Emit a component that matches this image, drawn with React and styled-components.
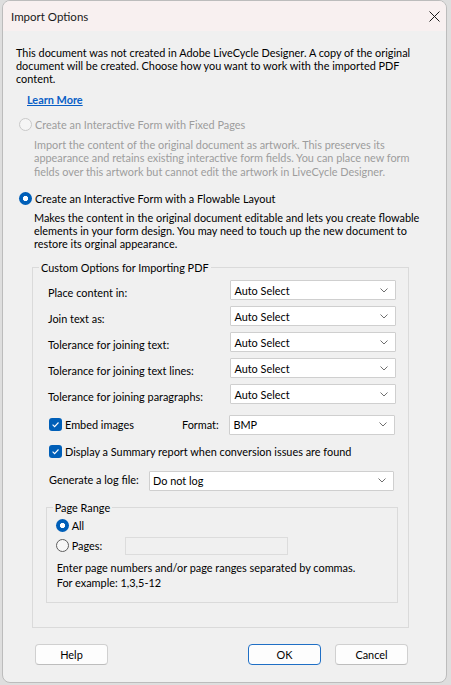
import React from 'react';
import styled, { createGlobalStyle, css } from 'styled-components';

const GlobalStyle = createGlobalStyle`
  html, body {
    margin: 0;
    padding: 0;
    background: #dedede;
  }
  body {
    font-family: Lato, "Liberation Sans", sans-serif;
    font-size: 10.9px;
    color: #000;
  }
`;

const Window = styled.div`
  width: 445px;
  height: 683px;
  margin-left: 2px;
  box-sizing: border-box;
  border: 1px solid #bcbcbc;
  border-radius: 8px;
  overflow: hidden;
  background: #f0f0f0;
  display: flex;
  flex-direction: column;
`;

const TitleBar = styled.div`
  height: 30px;
  flex: none;
  background: #f8f0f0;
  display: flex;
  align-items: center;
  justify-content: space-between;
  padding: 0 6px 0 8px;
`;

const Title = styled.span`
  font-size: 11.5px;
  color: #1a1a1a;
`;

const Content = styled.div`
  display: flex;
  flex-direction: column;
  align-items: flex-start;
`;

const Paragraph = styled.p`
  margin: ${({ $mt }) => $mt}px 0 0 ${({ $ml }) => $ml}px;
  line-height: ${({ $lh }) => $lh || 13}px;
  color: ${({ $disabled }) => ($disabled ? '#9d9d9d' : '#000')};
  white-space: nowrap;
`;

const LearnMore = styled.a`
  margin: 8px 0 0 24px;
  line-height: 13px;
  font-weight: 700;
  color: #0a5fc6;
  text-decoration: underline;
  cursor: pointer;
`;

const RadioRow = styled.label`
  display: flex;
  align-items: center;
  gap: 3px;
  height: ${({ $h }) => $h || 13}px;
  margin: ${({ $mt }) => $mt || 0}px 0 0 ${({ $ml }) => $ml || 0}px;
  color: ${({ $disabled }) => ($disabled ? '#9d9d9d' : '#000')};
  line-height: 13px;
  white-space: nowrap;
`;

const Radio = styled.span`
  width: 13px;
  height: 13px;
  flex: none;
  box-sizing: border-box;
  border-radius: 50%;
  ${({ $checked, $disabled }) =>
    $checked
      ? css`
          background: radial-gradient(circle, #fff 0 2.4px, #005fb8 2.9px);
        `
      : $disabled
      ? css`
          border: 1px solid #c9c9c9;
          background: #f5f5f5;
        `
      : css`
          border: 1px solid #5e5e5e;
          background: #f7f7f7;
        `}
`;

const GroupBox = styled.fieldset`
  margin: ${({ $mt }) => $mt}px 0 0 ${({ $ml }) => $ml}px;
  width: ${({ $w }) => $w}px;
  box-sizing: border-box;
  min-width: 0;
  border: 1px solid #dadada;
  padding: ${({ $pad }) => $pad};
  display: flex;
  flex-direction: column;
`;

// the legend is placed after the fieldset's left padding, so pull it back
const Legend = styled.legend`
  margin-left: ${({ $ml }) => $ml}px;
  padding: 0 2px;
  line-height: 13px;
`;

const OptionRow = styled.div`
  display: flex;
  align-items: center;
  height: ${({ $h }) => $h || 20}px;
  margin-top: ${({ $mt }) => $mt || 0}px;
`;

const FieldLabel = styled.span`
  width: ${({ $w }) => $w}px;
  flex: none;
  box-sizing: border-box;
  padding-left: ${({ $pl }) => $pl || 0}px;
  margin-top: ${({ $dy }) => $dy || 0}px;
  white-space: nowrap;
`;

const Select = styled.div`
  width: ${({ $w }) => $w}px;
  height: 20px;
  box-sizing: border-box;
  background: #fff;
  border: 1px solid #cfcfcf;
  border-radius: 1px;
  display: flex;
  align-items: center;
  justify-content: space-between;
  padding: 0 7px 0 3px;
  color: #000;
`;

const CheckRow = styled.label`
  display: flex;
  align-items: center;
  gap: 3px;
  margin-left: 1px;
  width: ${({ $w }) => ($w ? `${$w}px` : 'auto')};
  flex: none;
  white-space: nowrap;
`;

const CheckBox = styled.span`
  width: 13px;
  height: 13px;
  flex: none;
  border-radius: 3px;
  background: #005fb8;
  display: flex;
  align-items: center;
  justify-content: center;
`;

const PagesInput = styled.div`
  width: 163px;
  height: 18px;
  box-sizing: border-box;
  border: 1px solid #dcdcdc;
  background: #f0f0f0;
`;

const Hint = styled.p`
  margin: ${({ $mt }) => $mt || 0}px 0 0 1px;
  line-height: 15px;
  white-space: nowrap;
`;

const ButtonBar = styled.div`
  display: flex;
  align-items: center;
  margin: 16px 0 0 32px;
  width: 373px;
`;

const Button = styled.button`
  width: 73px;
  height: 21px;
  box-sizing: border-box;
  font-family: inherit;
  font-size: inherit;
  color: #000;
  background: #fdfdfd;
  border: 1px solid ${({ $primary }) => ($primary ? '#1f6fc5' : '#d0d0d0')};
  border-bottom-color: ${({ $primary }) => ($primary ? '#1f6fc5' : '#bdbdbd')};
  border-radius: 4px;
  padding: 0;
  margin-left: ${({ $ml }) => $ml || 0}px;
`;

const Chevron = () => (
  <svg width="8" height="5" viewBox="0 0 8 5">
    <path d="M0.5 0.5 L4 4 L7.5 0.5" fill="none" stroke="#6f6f6f" strokeWidth="1" />
  </svg>
);

const Check = () => (
  <svg width="9" height="9" viewBox="0 0 9 9">
    <path d="M1.6 4.6 L3.6 6.6 L7.5 2.5" fill="none" stroke="#fff" strokeWidth="1.1" />
  </svg>
);

const CloseIcon = () => (
  <svg width="11" height="11" viewBox="0 0 11 11">
    <path d="M0.5 0.5 L10.5 10.5 M10.5 0.5 L0.5 10.5" stroke="#1a1a1a" strokeWidth="1" />
  </svg>
);

const options = [
  'Place content in:',
  'Join text as:',
  'Tolerance for joining text:',
  'Tolerance for joining text lines:',
  'Tolerance for joining paragraphs:',
];

export default function App() {
  return (
    <>
      <GlobalStyle />
      <Window>
        <TitleBar>
          <Title>Import Options</Title>
          <CloseIcon />
        </TitleBar>
        <Content>
          <Paragraph $mt={15} $ml={13}>
            This document was not created in Adobe LiveCycle Designer. A copy of the original
            <br />
            document will be created. Choose how you want to work with the imported PDF
            <br />
            content.
          </Paragraph>
          <LearnMore>Learn More</LearnMore>

          <RadioRow $mt={12} $ml={16} $disabled>
            <Radio $disabled />
            Create an Interactive Form with Fixed Pages
          </RadioRow>
          <Paragraph $mt={6.5} $ml={31} $lh={13.5} $disabled>
            Import the content of the original document as artwork. This preserves its
            <br />
            appearance and retains existing interactive form fields. You can place new form
            <br />
            fields over this artwork but cannot edit the artwork in LiveCycle Designer.
          </Paragraph>

          <RadioRow $mt={13.5} $ml={16}>
            <Radio $checked />
            Create an Interactive Form with a Flowable Layout
          </RadioRow>
          <Paragraph $mt={6} $ml={31}>
            Makes the content in the original document editable and lets you create flowable
            <br />
            elements in your form design. You may need to touch up the new document to
            <br />
            restore its orginal appearance.
          </Paragraph>

          <GroupBox $mt={11} $ml={29} $w={377} $pad="6.5px 0 24px 15px">
            <Legend $ml={-9}>Custom Options for Importing PDF</Legend>
            {options.map((label, i) => (
              <OptionRow key={label} $mt={i === 0 ? 0 : 6}>
                <FieldLabel $w={182.4} $dy={5}>{label}</FieldLabel>
                <Select $w={166}>
                  Auto Select
                  <Chevron />
                </Select>
              </OptionRow>
            ))}
            <OptionRow $mt={10.7}>
              <CheckRow $w={133}>
                <CheckBox><Check /></CheckBox>
                Embed images
              </CheckRow>
              <FieldLabel $w={47.4}>Format:</FieldLabel>
              <Select $w={166}>
                BMP
                <Chevron />
              </Select>
            </OptionRow>
            <OptionRow $h={13} $mt={10.8}>
              <CheckRow>
                <CheckBox><Check /></CheckBox>
                Display a Summary report when conversion issues are found
              </CheckRow>
            </OptionRow>
            <OptionRow $mt={12.2}>
              <FieldLabel $w={101} $pl={1} $dy={-3}>Generate a log file:</FieldLabel>
              <Select $w={245}>
                Do not log
                <Chevron />
              </Select>
            </OptionRow>

            <GroupBox $mt={10.8} $ml={-2.3} $w={352} $pad="5px 0 12px 9px">
              <Legend $ml={-3}>Page Range</Legend>
              <RadioRow>
                <Radio $checked />
                All
              </RadioRow>
              <RadioRow $h={18} $mt={4.2}>
                <Radio />
                <FieldLabel $w={50}>Pages:</FieldLabel>
                <PagesInput />
              </RadioRow>
              <Hint $mt={5.8}>Enter page numbers and/or page ranges separated by commas.</Hint>
              <Hint>For example: 1,3,5-12</Hint>
            </GroupBox>
          </GroupBox>

          <ButtonBar>
            <Button>Help</Button>
            <Button $primary $ml={140}>OK</Button>
            <Button $ml={14}>Cancel</Button>
          </ButtonBar>
        </Content>
      </Window>
    </>
  );
}
